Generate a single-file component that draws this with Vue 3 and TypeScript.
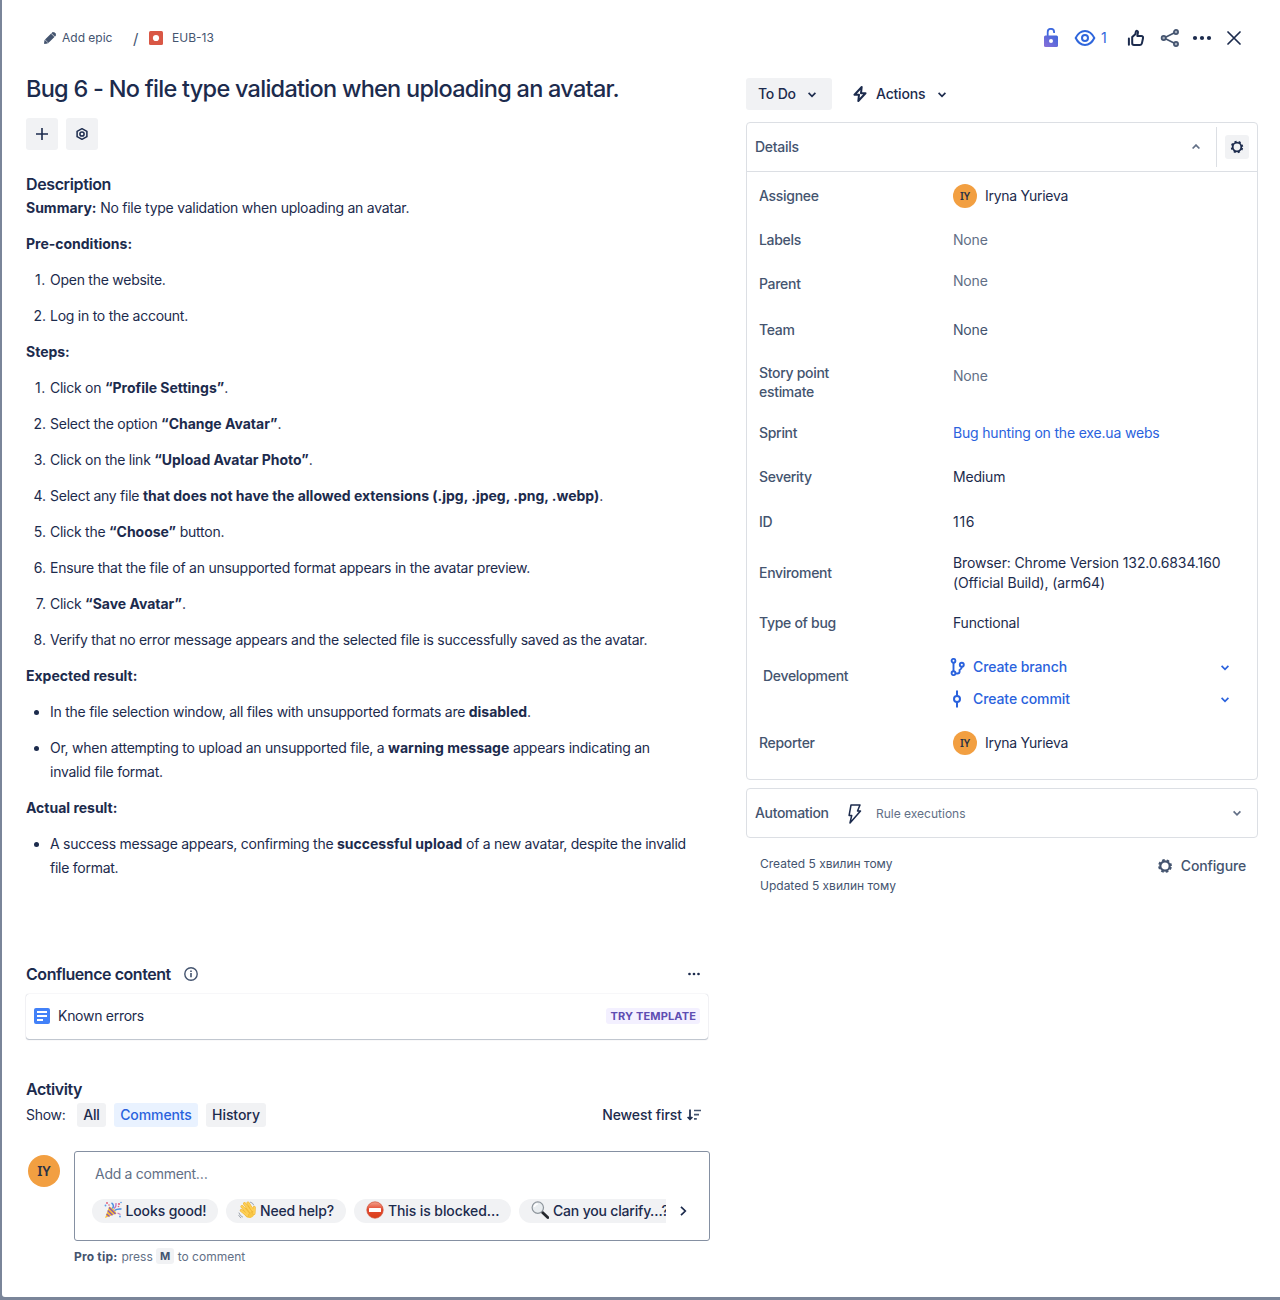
<script setup lang="ts">
interface Run {
  t: string
  b?: boolean
}

interface Field {
  key: string
  label: string
  kind: 'user' | 'none' | 'link' | 'text'
  value: string
}

const preconditions: Run[][] = [
  [{ t: 'Open the website.' }],
  [{ t: 'Log in to the account.' }],
]

const steps: Run[][] = [
  [{ t: 'Click on ' }, { t: '“Profile Settings”', b: true }, { t: '.' }],
  [{ t: 'Select the option ' }, { t: '“Change Avatar”', b: true }, { t: '.' }],
  [{ t: 'Click on the link ' }, { t: '“Upload Avatar Photo”', b: true }, { t: '.' }],
  [
    { t: 'Select any file ' },
    { t: 'that does not have the allowed extensions (.jpg, .jpeg, .png, .webp)', b: true },
    { t: '.' },
  ],
  [{ t: 'Click the ' }, { t: '“Choose”', b: true }, { t: ' button.' }],
  [{ t: 'Ensure that the file of an unsupported format appears in the avatar preview.' }],
  [{ t: 'Click ' }, { t: '“Save Avatar”', b: true }, { t: '.' }],
  [{ t: 'Verify that no error message appears and the selected file is successfully saved as the avatar.' }],
]

const expected: Run[][] = [
  [{ t: 'In the file selection window, all files with unsupported formats are ' }, { t: 'disabled', b: true }, { t: '.' }],
  [
    { t: 'Or, when attempting to upload an unsupported file, a ' },
    { t: 'warning message', b: true },
    { t: ' appears indicating an' },
    { t: '\ninvalid file format.' },
  ],
]

const actual: Run[][] = [
  [
    { t: 'A success message appears, confirming the ' },
    { t: 'successful upload', b: true },
    { t: ' of a new avatar, despite the invalid' },
    { t: '\nfile format.' },
  ],
]

const sections = [
  { title: 'Pre-conditions:', ordered: true, items: preconditions },
  { title: 'Steps:', ordered: true, items: steps },
  { title: 'Expected result:', ordered: false, items: expected },
  { title: 'Actual result:', ordered: false, items: actual },
]

const fields: Field[] = [
  { key: 'assignee', label: 'Assignee', kind: 'user', value: 'Iryna Yurieva' },
  { key: 'labels', label: 'Labels', kind: 'none', value: 'None' },
  { key: 'parent', label: 'Parent', kind: 'none', value: 'None' },
  { key: 'team', label: 'Team', kind: 'none', value: 'None' },
  { key: 'story', label: 'Story point estimate', kind: 'none', value: 'None' },
  { key: 'sprint', label: 'Sprint', kind: 'link', value: 'Bug hunting on the exe.ua webs' },
  { key: 'severity', label: 'Severity', kind: 'text', value: 'Medium' },
  { key: 'id', label: 'ID', kind: 'text', value: '116' },
  { key: 'environment', label: 'Enviroment', kind: 'text', value: 'Browser: Chrome Version 132.0.6834.160\n(Official Build), (arm64)' },
  { key: 'type', label: 'Type of bug', kind: 'text', value: 'Functional' },
]
</script>

<template>
  <div class="backdrop">
    <div class="modal">
      <header class="topbar">
        <nav class="crumbs">
          <svg class="pencil" width="12" height="12" viewBox="0 0 12 12">
            <path d="M.3 11.700.9 8.300 3.700 11.100Z M1.400 7.500 7 1.900 10.100 5 4.500 10.600Z M7.700 1.200 8.300.6Q9.400-.2 10.500.7L11.400 1.600Q12.300 2.700 11.400 3.700L10.800 4.300Z" fill="#44546f" stroke="#44546f" stroke-width=".7" />
          </svg>
          <span class="epic">Add epic</span>
          <span class="slash">/</span>
          <svg class="bug" width="14" height="14" viewBox="0 0 14 14">
            <rect width="14" height="14" rx="1.5" fill="#d95745" />
            <circle cx="7" cy="7" r="3.1" fill="#fff" />
          </svg>
          <span class="key">EUB-13</span>
        </nav>
        <div class="tools">
          <svg class="lock" width="16" height="20" viewBox="0 0 16 20">
            <defs>
              <linearGradient id="lockfill" x1="1" y1="0" x2="0" y2="1">
                <stop offset="0" stop-color="#3d66dc" />
                <stop offset="1" stop-color="#8a6fd8" />
              </linearGradient>
            </defs>
            <path d="M4.700 8V4a3.200 3.200 0 0 1 6.400 0V5" fill="none" stroke="#3d69df" stroke-width="1.800" />
            <rect x="1" y="7.500" width="14" height="11.500" rx="1.500" fill="url(#lockfill)" />
            <circle cx="8" cy="13" r="2" fill="#fff" />
          </svg>
          <svg class="eye" width="22" height="18" viewBox="0 0 22 18" fill="none" stroke="#2f66dc" stroke-width="2">
            <path d="M1.700 9C4 4.300 7.200 2 11 2s7 2.300 9.300 7C18 13.700 14.800 16 11 16S4 13.700 1.700 9Z" />
            <circle cx="11" cy="9" r="3" />
          </svg>
          <span class="watch">1</span>
          <svg class="thumb" width="18" height="18" viewBox="0 0 18 18" fill="none" stroke="#1c2b4d" stroke-width="2" stroke-linejoin="round" stroke-linecap="round">
            <path d="M1.900 9.500V15.800M5.200 8 8.300 5.200 8.900 2.400C9.200 1.300 11.300 1.700 11 3.300L10.300 7H14.300C15.600 7 16.300 8 16 9.200L14.900 14.400C14.600 15.700 14 16 13 16H7C5.700 16 5.200 15.400 5.200 14.300Z" />
          </svg>
          <svg class="share" width="20" height="20" viewBox="0 0 20 20" fill="#a6afbd" stroke="#44546f" stroke-width="1.700">
            <path d="M4 10 16 4M4 10l12 6" />
            <circle cx="3.700" cy="10" r="2.100" />
            <circle cx="16" cy="4" r="2.100" />
            <circle cx="16" cy="16" r="2.100" />
          </svg>
          <svg class="more" width="20" height="6" viewBox="0 0 20 6" fill="#1c2b4d">
            <circle cx="3" cy="3" r="2.100" /><circle cx="10" cy="3" r="2.100" /><circle cx="17" cy="3" r="2.100" />
          </svg>
          <svg class="close" width="14" height="14" viewBox="0 0 14 14" stroke="#1c2b4d" stroke-width="1.700" stroke-linecap="round">
            <path d="M1 1l12 12M13 1 1 13" />
          </svg>
        </div>
      </header>

      <div class="columns">
        <main class="left">
          <h1>Bug 6 - No file type validation when uploading an avatar.</h1>
          <div class="quick">
            <button type="button">
              <svg width="12" height="12" viewBox="0 0 12 12" stroke="#1c2b4d" stroke-width="1.600"><path d="M6 0v12M0 6h12" /></svg>
            </button>
            <button type="button">
              <svg width="12" height="12" viewBox="0 0 12 12" fill="none" stroke="#1c2b4d" stroke-width="1.500">
                <path d="M6 .700 10.900 3.300V8.700L6 11.300 1.100 8.700V3.300Z" stroke-linejoin="round" /><circle cx="6" cy="6" r="2.100" />
              </svg>
            </button>
          </div>

          <h2 class="h-desc">Description</h2>
          <div class="prose">
            <p><b>Summary:</b> No file type validation when uploading an avatar.</p>
            <template v-for="s in sections" :key="s.title">
              <p><b>{{ s.title }}</b></p>
              <component :is="s.ordered ? 'ol' : 'ul'">
                <li v-for="(item, i) in s.items" :key="i">
                  <span class="marker" :class="{ first: i === 0 }"><template v-if="s.ordered">{{ i + 1 }}.</template><i v-else class="dot"></i></span>
                  <span class="body"><span v-for="(r, j) in item" :key="j" :class="{ strong: r.b }">{{ r.t }}</span></span>
                </li>
              </component>
            </template>
          </div>

          <section class="confluence">
            <div class="conf-head">
              <h2>Confluence content</h2>
              <svg class="info" width="14" height="14" viewBox="0 0 14 14" fill="none" stroke="#44546f" stroke-width="1.400">
                <circle cx="7" cy="7" r="6.200" /><path d="M7 6v4.300M7 3.400v1.500" stroke-width="1.600" />
              </svg>
              <svg class="dots" width="12" height="4" viewBox="0 0 12 4" fill="#1c2b4d">
                <circle cx="1.500" cy="2" r="1.350" /><circle cx="6" cy="2" r="1.350" /><circle cx="10.500" cy="2" r="1.350" />
              </svg>
            </div>
            <div class="card">
              <svg width="16" height="16" viewBox="0 0 16 16">
                <rect width="16" height="16" rx="2" fill="#4281f8" />
                <path d="M3 4h10M3 8h10M3 12h6" stroke="#fff" stroke-width="1.800" />
              </svg>
              <span class="card-title">Known errors</span>
              <span class="try">TRY TEMPLATE</span>
            </div>
          </section>

          <section class="activity">
            <h2>Activity</h2>
            <div class="show">
              <span class="show-label">Show:</span>
              <button type="button" class="tab t-all">All</button>
              <button type="button" class="tab t-comments">Comments</button>
              <button type="button" class="tab t-history">History</button>
              <span class="sort">Newest first</span>
              <svg width="14" height="12" viewBox="0 0 14 12" fill="none" stroke="#1c2b4d" stroke-width="1.700">
                <path d="M3 .500V10M.600 8 3 10.400 5.400 8" /><path d="M7 1.500h7M7 5.700h5M7 9.900h2.800" stroke="#44546f" />
              </svg>
            </div>
            <div class="composer">
              <div class="avatar big">IY</div>
              <div class="box">
                <div class="placeholder">Add a comment…</div>
                <div class="reply-row">
                  <div class="replies">
                    <span class="chip c1">
                      <svg width="18" height="18" viewBox="0 0 18 18">
                        <path d="M1 17 5.200 5.500Q10.500 7.500 12.500 12.500Z" fill="#f5bd3c" />
                        <path d="M3.700 9.500 8.500 14.200M2.500 13 5.500 15.400M5 6.500l6.500 6.500" stroke="#8a56b5" stroke-width="1.300" />
                        <path d="M8.500 7.500C10 5.500 9.500 3 7.500 2M10.500 9.500Q13 7.500 17.500 8" fill="none" stroke="#4d8fe0" stroke-width="1.500" />
                        <path d="M10 7.500Q12.500 6 12 2M13.500 12l3 1.500" fill="none" stroke="#c47abc" stroke-width="1.300" />
                        <g fill="#e0607d"><circle cx="3" cy="2" r="1" /><circle cx="15" cy="3" r="1.100" /><circle cx="14.500" cy="5.500" r=".8" /><circle cx="5" cy="4" r=".8" /></g>
                        <g fill="#5a9be6"><circle cx="1.500" cy="4.500" r=".9" /><circle cx="17" cy="1.500" r=".8" /><circle cx="16" cy="15.500" r=".9" /></g>
                      </svg>
                      <span>Looks good!</span>
                    </span>
                    <span class="chip c2">
                      <svg width="18" height="18" viewBox="0 0 18 18" fill="none" stroke-linecap="round">
                        <path d="M5.500 7.500 11.500 4.500 16 9Q18 15 12.500 17 9 17.500 7 14.500Z" fill="#f8c746" />
                        <path d="M4 5.500l6 7M6.500 2.600l6 8M10 2l4.500 7M3.300 9.500l6 5M16.300 6.500l-.3 6" stroke="#eeb231" stroke-width="2.900" />
                        <path d="M4 5.500l6 7M6.500 2.600l6 8M10 2l4.500 7M3.300 9.500l6 5M16.300 6.500l-.3 6" stroke="#fdcf56" stroke-width="2" />
                        <path d="M12.500 1.200q2.500.5 3.200 2.800M1 12q1 3 3.500 4M.8 14.500q.8 1.600 2 2.200" stroke="#9aa1aa" stroke-width="1" />
                      </svg>
                      <span>Need help?</span>
                    </span>
                    <span class="chip c3">
                      <svg width="18" height="18" viewBox="0 0 18 18">
                        <defs><linearGradient id="stop" x1="0" y1="0" x2="0" y2="1"><stop offset="0" stop-color="#f3a48f" /><stop offset=".45" stop-color="#e44b32" /><stop offset="1" stop-color="#d93d16" /></linearGradient></defs>
                        <circle cx="9" cy="9" r="8.200" fill="url(#stop)" stroke="#cf5038" stroke-width=".7" />
                        <rect x="3" y="7" width="12" height="4" rx=".5" fill="#fff" />
                      </svg>
                      <span>This is blocked…</span>
                    </span>
                    <span class="chip c4">
                      <svg width="18" height="18" viewBox="0 0 18 18">
                        <path d="M11 11l5.800 5.500" stroke="#25282d" stroke-width="2.800" stroke-linecap="round" />
                        <circle cx="6.800" cy="6.600" r="5.700" fill="#e9edf0" stroke="#8e959c" stroke-width="1.200" />
                        <path d="M3.300 6a3.700 3.700 0 0 1 3.500-3" fill="none" stroke="#fff" stroke-width="1.500" />
                      </svg>
                      <span>Can you clarify…?</span>
                    </span>
                  </div>
                  <svg class="next" width="7" height="10" viewBox="0 0 7 10" fill="none" stroke="#1c2b4d" stroke-width="1.700"><path d="M1 .800 5.300 5 1 9.200" /></svg>
                </div>
              </div>
            </div>
            <div class="tip"><b>Pro tip:</b><span class="press">press</span><kbd>M</kbd><span>to comment</span></div>
          </section>
        </main>

        <aside class="right">
          <div class="status-row">
            <button type="button" class="status">
              <span>To Do</span>
              <svg width="8" height="6" viewBox="0 0 8 6" fill="none" stroke="#1c2b4d" stroke-width="1.700"><path d="M.600.900 4 4.300 7.400.900" /></svg>
            </button>
            <button type="button" class="actions">
              <svg class="flash" width="14" height="16" viewBox="0 0 14 16" fill="none" stroke="#1c2b4d" stroke-width="2" stroke-linejoin="round">
                <path d="M8.700 1 1.500 8.800H6L5.300 15 12.500 7.200H8Z" />
              </svg>
              <span>Actions</span>
              <svg width="8" height="6" viewBox="0 0 8 6" fill="none" stroke="#1c2b4d" stroke-width="1.700"><path d="M.600.900 4 4.300 7.400.900" /></svg>
            </button>
          </div>

          <section class="panel">
            <div class="panel-head">
              <span class="panel-title">Details</span>
              <svg width="8" height="6" viewBox="0 0 8 6" fill="none" stroke="#626f86" stroke-width="1.700"><path d="M.600 4.500 4 1.100 7.400 4.500" /></svg>
              <div class="gear-cell">
                <button type="button" class="gear">
                  <svg width="14" height="14" viewBox="0 0 14 14" fill="none" stroke="#1c2b4d">
                    <circle cx="7" cy="7" r="4.300" stroke-width="1.800" />
                    <circle cx="7" cy="7" r="5.400" stroke-width="1.600" stroke-dasharray="2.100 2.141" stroke-dashoffset="-1.070" />
                  </svg>
                </button>
              </div>
            </div>
            <div class="fields">
              <div v-for="f in fields" :key="f.key" class="row" :class="'r-' + f.key">
                <span class="label">{{ f.label }}</span>
                <span class="value" :class="'v-' + f.kind">
                  <span v-if="f.kind === 'user'" class="avatar">IY</span>{{ f.value }}
                </span>
              </div>
              <div class="row r-dev">
                <span class="label">Development</span>
                <div class="dev">
                  <div class="dev-line">
                    <svg width="16" height="18" viewBox="0 0 16 18" fill="none" stroke="#2a62dd" stroke-width="1.900">
                      <circle cx="3.500" cy="2.800" r="1.900" /><circle cx="3.500" cy="15.200" r="1.900" /><circle cx="11.800" cy="6.800" r="2" />
                      <path d="M3.500 4.700v8.600M5.400 15.500H7.500Q9.600 15.500 9.600 13.500V12Q11.800 11 11.800 8.800" />
                    </svg>
                    <span>Create branch</span>
                    <svg class="chev" width="8" height="6" viewBox="0 0 8 6" fill="none" stroke="#2a62dd" stroke-width="1.700"><path d="M.600.900 4 4.300 7.400.900" /></svg>
                  </div>
                  <div class="dev-line">
                    <svg width="16" height="18" viewBox="0 0 16 18" fill="none" stroke="#2a62dd" stroke-width="2">
                      <circle cx="7" cy="9" r="3" /><path d="M7 .500V6M7 12v5.500" />
                    </svg>
                    <span>Create commit</span>
                    <svg class="chev" width="8" height="6" viewBox="0 0 8 6" fill="none" stroke="#2a62dd" stroke-width="1.700"><path d="M.600.900 4 4.300 7.400.900" /></svg>
                  </div>
                </div>
              </div>
              <div class="row r-reporter">
                <span class="label">Reporter</span>
                <span class="value v-user"><span class="avatar">IY</span>Iryna Yurieva</span>
              </div>
            </div>
          </section>

          <section class="panel automation">
            <span class="panel-title">Automation</span>
            <svg class="bolt" width="14" height="20" viewBox="0 0 14 20" fill="none" stroke="#1c2b4d" stroke-width="1.500" stroke-linejoin="round">
              <path d="M3 1H12L9.500 7H12.500L2 19 3.700 11.500H1.100Z" />
            </svg>
            <span class="rules">Rule executions</span>
            <svg width="8" height="6" viewBox="0 0 8 6" fill="none" stroke="#626f86" stroke-width="1.700"><path d="M.600 1.400 4 4.800 7.400 1.400" /></svg>
          </section>

          <footer class="meta">
            <div class="dates"><div>Created 5 хвилин тому</div><div>Updated 5 хвилин тому</div></div>
            <div class="configure">
              <svg width="14" height="14" viewBox="0 0 14 14" fill="none" stroke="#44546f">
                <circle cx="7" cy="7" r="4.700" stroke-width="2.200" />
                <circle cx="7" cy="7" r="6" stroke-width="1.800" stroke-dasharray="2.600 2.112" stroke-dashoffset="-1.056" />
              </svg>
              <span>Configure</span>
            </div>
          </footer>
        </aside>
      </div>
    </div>
  </div>
</template>

<style>
body {
  margin: 0;
  background: #7a8599;
}
</style>

<style scoped>
.backdrop {
  box-sizing: border-box;
  width: 1280px;
  height: 1300px;
  padding: 0 0 3px 2px;
  background: #7a8599;
  overflow: hidden;
  font-family: Inter, "Liberation Sans", sans-serif;
  font-size: 14px;
  letter-spacing: -0.18px;
  color: #1c2b4d;
}
.modal {
  height: 1297px;
  background: #fff;
  border-bottom-left-radius: 3px;
}
svg { flex: none; display: block; }
button {
  border: 0;
  padding: 0;
  font: inherit;
  letter-spacing: inherit;
  color: inherit;
  background: #f1f2f4;
  border-radius: 3px;
}
h1, h2, p, ol, ul { margin: 0; padding: 0; }

.topbar {
  display: flex;
  justify-content: space-between;
  height: 75px;
  padding: 0 39px 0 42px;
  box-sizing: border-box;
}
.crumbs, .tools { display: flex; align-items: center; height: 76px; }
.crumbs { font-size: 12px; letter-spacing: 0; color: #44546f; }
.epic { margin-left: 6px; width: 71px; padding-bottom: 2px; }
.slash { width: 16px; font-size: 15px; }
.key { margin-left: 9px; padding-bottom: 2px; }
.eye { margin-left: 15px; }
.watch { width: 8px; margin-left: 5px; padding-bottom: 1px; color: #2f66dc; }
.thumb { margin-left: 18px; }
.share { margin-left: 15px; }
.more { margin-left: 12px; }
.close { margin-left: 15px; }

.columns { display: flex; gap: 37px; padding-left: 24px; }
.left { width: 683px; }
.right { width: 512px; padding-top: 3px; }

h1 {
  font-size: 23.5px;
  line-height: 28px;
  font-weight: 550;
  letter-spacing: -0.73px;
  white-space: nowrap;
}
h2 {
  font-size: 16px;
  line-height: 20px;
  font-weight: 600;
  letter-spacing: -0.45px;
}
.quick { display: flex; gap: 8px; margin-top: 15px; }
.quick button { width: 32px; height: 32px; display: flex; align-items: center; justify-content: center; }
.h-desc { margin-top: 24px; letter-spacing: -0.38px; }
.prose { margin-top: 2px; height: 700px; line-height: 24px; letter-spacing: -0.257px; }
.prose p { margin-bottom: 12px; white-space: nowrap; }
.prose b, .strong { font-weight: 700; letter-spacing: -0.01px; }
li { display: flex; margin-bottom: 12px; }
.marker { width: 20px; margin-right: 4px; text-align: right; flex: none; letter-spacing: 0; }
ol .first { letter-spacing: 0.6px; }
.dot { display: block; width: 5px; height: 5px; margin: 10px 0 0 8px; border-radius: 50%; background: #1c2b4d; }
.body { white-space: pre; }

.confluence { margin-top: 68px; }
.conf-head { display: flex; align-items: center; height: 20px; }
.info { margin-left: 13px; }
.dots { margin-left: auto; margin-right: 9px; }
.card {
  display: flex;
  align-items: center;
  box-sizing: border-box;
  height: 45px;
  margin: 10px 1px 0 0;
  padding: 0 8px 1px 8px;
  border-radius: 3px;
  box-shadow: 0 1px 1px rgba(9, 30, 66, 0.25), 0 0 1px rgba(9, 30, 66, 0.31);
}
.card-title { margin-left: 8px; padding-bottom: 1px; letter-spacing: -0.28px; }
.try {
  margin-left: auto;
  padding: 0 4px;
  line-height: 16px;
  font-size: 11px;
  font-weight: 700;
  letter-spacing: 0.15px;
  color: #5e4db2;
  background: #f3f0ff;
  border-radius: 3px;
}
.activity { margin-top: 40px; }
.show { display: flex; align-items: center; height: 24px; margin-top: 4px; font-weight: 500; }
.show-label { width: 51px; font-weight: 400; padding-bottom: 1px; letter-spacing: -0.3px; }
.tab { height: 24px; margin-right: 8px; padding-bottom: 2px; }
.t-all { width: 29px; }
.t-comments { width: 84px; color: #2a62dd; background: #e9f2ff; letter-spacing: -0.1px; }
.t-history { width: 60px; letter-spacing: -0.05px; }
.sort { margin-left: auto; margin-right: 5px; padding-bottom: 2px; letter-spacing: -0.08px; }
.show svg { margin-right: 8px; }
.composer { display: flex; margin-top: 24px; margin-right: -1px; }
.avatar {
  display: flex;
  align-items: center;
  justify-content: center;
  flex: none;
  width: 24px;
  height: 24px;
  margin-right: 8px;
  border-radius: 50%;
  background: #f29f41;
  font-family: "Noto Sans", sans-serif;
  font-size: 10.5px;
  font-weight: 600;
  letter-spacing: 0;
  color: #2b3245;
}
.big { box-sizing: border-box; width: 32px; height: 32px; margin: 4px 14px 0 2px; padding-bottom: 2px; font-size: 14px; }
.box { flex: 1; min-width: 0; box-sizing: border-box; height: 90px; border: 1px solid #8590a2; border-radius: 3px; }
.placeholder { margin: 12px 0 0 20px; line-height: 20px; letter-spacing: -0.28px; color: #626f86; }
.reply-row { display: flex; align-items: center; margin: 15px 0 0 17px; }
.replies { display: flex; gap: 8px; width: 574px; overflow: hidden; }
.chip {
  display: flex;
  align-items: center;
  flex: none;
  box-sizing: border-box;
  height: 24px;
  border-radius: 12px;
  background: #f1f2f4;
  padding-left: 12px;
  font-weight: 500;
  white-space: nowrap;
}
.chip svg { margin: -2px 4px 0 0; }
.chip span { padding-bottom: 1px; }
.c1 { width: 126px; letter-spacing: -0.13px; }
.c1 svg { margin-right: 3.5px; }
.c2 { width: 120px; }
.c3 { width: 157px; letter-spacing: -0.1px; }
.c4 { width: 170px; }
.next { margin-left: 13.5px; }
.tip { display: flex; align-items: center; height: 16px; margin: 7px 0 0 48px; font-size: 12px; letter-spacing: 0; color: #626f86; }
.tip b { font-weight: 700; letter-spacing: 0.2px; color: #44546f; }
.press { margin-left: 4px; }
kbd {
  width: 18px;
  height: 16px;
  margin: 0 3.5px;
  text-align: center;
  font: 700 11px/16px Inter, sans-serif;
  color: #44546f;
  background: #f1f2f4;
  border-radius: 3px;
}

.status-row { display: flex; gap: 10px; height: 32px; font-weight: 500; }
.status-row span { padding-bottom: 2px; }
.status-row svg { margin-top: 1px; }
.status-row .flash { margin-top: 0; }
.status { width: 86px; display: flex; align-items: center; padding: 0 16px 0 12px; justify-content: space-between; box-sizing: border-box; }
.actions { display: flex; align-items: center; background: none; padding-left: 11px; }
.actions span { margin: 0 13px 0 9px; }
.panel { box-sizing: border-box; margin-top: 12px; height: 658px; border: 1px solid #dcdfe4; border-radius: 4px; }
.panel-head { display: flex; align-items: center; height: 48px; padding-left: 8px; border-bottom: 1px solid #dcdfe4; }
.panel-title { flex: 1; padding-bottom: 2px; font-weight: 500; letter-spacing: -0.28px; color: #44546f; }
.gear-cell { display: flex; align-items: center; height: 40px; margin-left: 16px; padding: 0 8px; border-left: 1px solid #dcdfe4; }
.gear { width: 24px; height: 24px; display: flex; align-items: center; justify-content: center; }
.row { display: flex; align-items: center; padding-left: 12px; box-sizing: border-box; }
.label { width: 100px; margin-right: 94px; padding-bottom: 2px; font-weight: 500; line-height: 19px; letter-spacing: -0.3px; color: #44546f; flex: none; }
.value { display: flex; align-items: center; line-height: 20px; white-space: pre-line; }
.v-none { color: #626f86; }
.v-link { color: #2a62dd; }
.v-user { letter-spacing: -0.3px; }
.r-assignee { height: 48px; }
.r-labels { height: 40px; }
.r-parent { height: 48px; }
.r-parent .value { padding-bottom: 6px; }
.r-team { height: 44px; }
.r-team .value { color: #44546f; }
.r-story { height: 61px; }
.r-story .value { padding-bottom: 13px; }
.r-sprint { height: 40px; }
.r-severity { height: 48px; }
.r-id { height: 42px; }
.r-id .value { letter-spacing: 0.7px; }
.r-environment { height: 60px; }
.r-environment .value { letter-spacing: -0.12px; }
.r-type { height: 40px; }
.r-dev { height: 66px; padding-left: 16px; }
.r-dev .label { margin-right: 87px; }
.r-reporter { height: 68px; }
.dev { flex: 1; padding-top: 14px; font-weight: 500; letter-spacing: -0.09px; color: #2a62dd; }
.dev-line { display: flex; align-items: center; height: 32px; }
.dev-line span { margin-left: 7px; padding-bottom: 2px; }
.chev { margin: 1px 28px 0 auto; }
.automation { display: flex; align-items: center; height: 50px; margin-top: 8px; padding: 0 16px 0 8px; }
.automation .panel-title { flex: none; width: 93px; padding-bottom: 1px; letter-spacing: -0.33px; }
.bolt { margin-top: 2px; }
.rules { flex: 1; margin-left: 14px; font-size: 12px; letter-spacing: 0; color: #626f86; }
.meta { display: flex; justify-content: space-between; padding: 15px 12px 0 14px; }
.dates { font-size: 12px; line-height: 22px; letter-spacing: 0; color: #44546f; }
.configure { display: flex; align-items: center; gap: 9px; height: 26px; font-weight: 500; letter-spacing: -0.15px; color: #44546f; }
.configure span { padding-bottom: 2px; }
</style>
